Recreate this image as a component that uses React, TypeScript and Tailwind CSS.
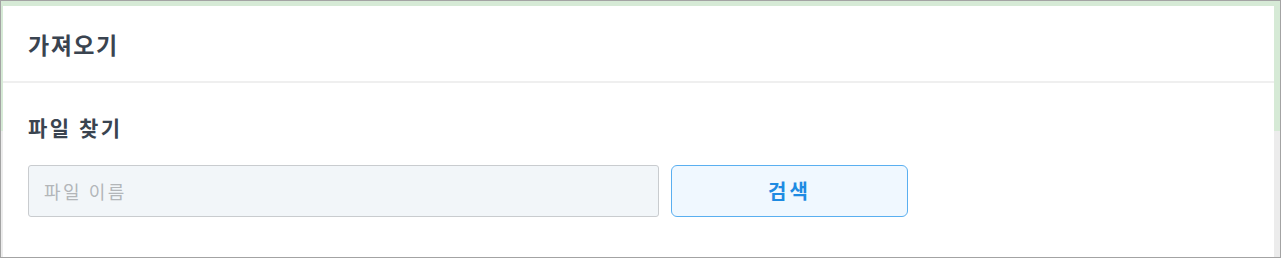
export default function App() {
  return (
    <div
      className="w-[1281px] h-[258px] border border-[#a3a3a3] bg-[linear-gradient(to_bottom,#d6ead6_0px,#d6ead6_130px,#ececec_130px)] pt-[5px] pl-[2px] pr-[6px] overflow-hidden"
      style={{ fontFamily: '"Noto Sans CJK KR", "Noto Sans", sans-serif' }}
    >
      <div className="h-full bg-white">
        <div className="h-[77px] flex items-center px-[25px] pt-[2px] border-b-2 border-[#efefef]">
          <h2 className="text-[23px] font-bold text-[#3a4450] tracking-[1.5px]">가져오기</h2>
        </div>
        <div className="px-[25px] pt-[30px]">
          <h3 className="text-[21px] font-bold text-[#3a4450] leading-[28px] tracking-[2.5px]">파일 찾기</h3>
          <div className="flex gap-[12px] mt-[24px]">
            <input
              type="text"
              placeholder="파일 이름"
              className="w-[631px] h-[52px] bg-[#f2f6f9] border border-[#c9cccf] rounded-[3px] px-[15px] text-[18px] tracking-[2.5px] placeholder:text-[#b3b6b9] outline-none"
            />
            <button className="w-[237px] h-[52px] bg-[#f0f8ff] border-[1.5px] border-[#5aaff0] rounded-[6px] text-[20px] font-bold tracking-[3px] text-[#1e8be2]">
              검색
            </button>
          </div>
        </div>
      </div>
    </div>
  )
}
